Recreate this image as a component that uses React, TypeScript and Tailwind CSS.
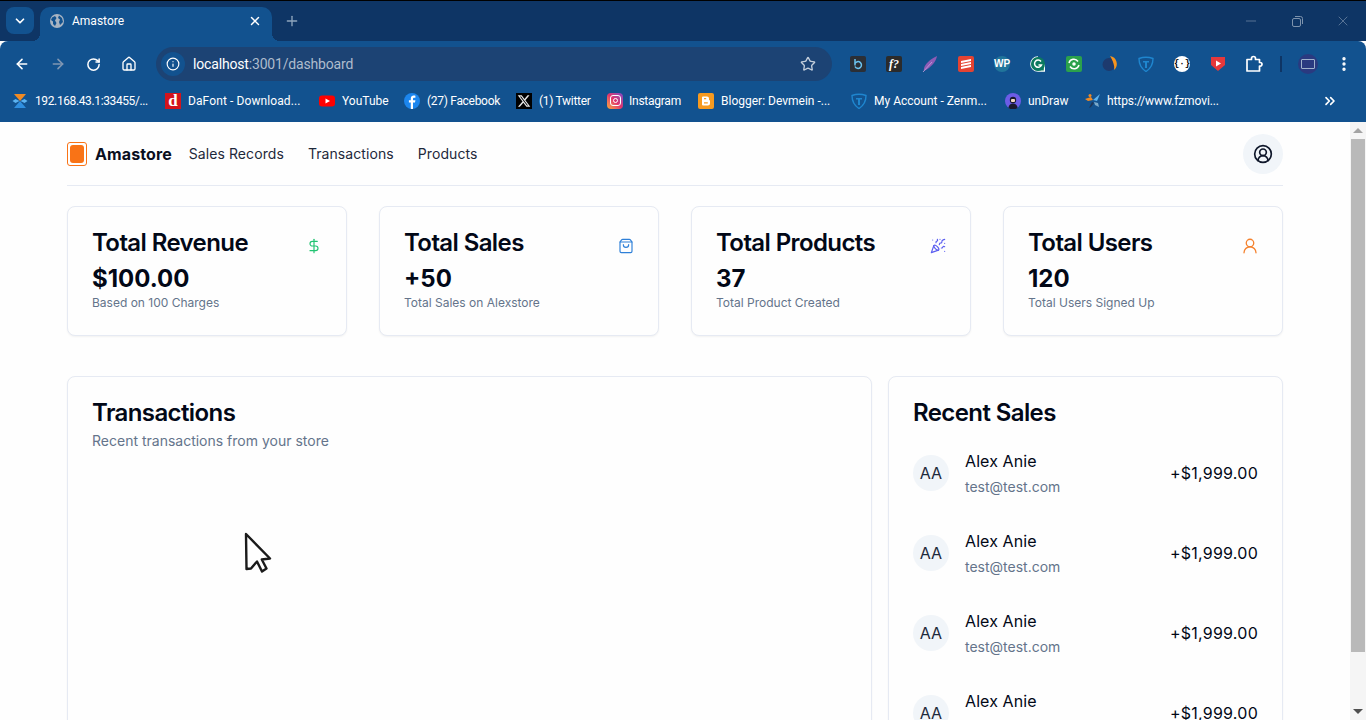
import {
  ArrowLeft, ArrowRight, ChevronDown, ChevronsRight, CircleUserRound, DollarSign, Home, Info,
  Minus, MoreVertical, PartyPopper, Plus, RotateCw, ShoppingBag, Star, UserRound, X,
} from 'lucide-react'
import type { ReactNode } from 'react'

const CARDS = [
  { title: 'Total Revenue', value: '$100.00', note: 'Based on 100 Charges', icon: <DollarSign size={16} strokeWidth={1.75} className="text-[#22c372]" /> },
  { title: 'Total Sales', value: '+50', note: 'Total Sales on Alexstore', icon: <ShoppingBag size={16} strokeWidth={1.75} className="text-[#2f80d8]" /> },
  { title: 'Total Products', value: '37', note: 'Total Product Created', icon: <PartyPopper size={16} strokeWidth={1.75} className="text-[#5b5ef0]" /> },
  { title: 'Total Users', value: '120', note: 'Total Users Signed Up', icon: <UserRound size={18} strokeWidth={1.75} className="-mt-px -mr-px text-[#f5822e]" /> },
]

const SALES = [1, 2, 3, 4]

function ZenShield({ size = 16 }: { size?: number }) {
  return (
    <svg width={size} height={size} viewBox="0 0 16 16" fill="none">
      <path d="M1 2.500C5 1 11 1 15 2.500C15 9 12 13 8 15.500C4 13 1 9 1 2.500Z" stroke="#1f86cf" strokeWidth="1.400" />
      <path d="M5 5h6v1.600H9V12H7V6.600H5Z" fill="#1f86cf" />
    </svg>
  )
}

const BOOKMARKS: { label: string; width: string; fit: string; icon: ReactNode }[] = [
  {
    label: '192.168.43.1:33455/...',
    width: 'w-[153px]',
    fit: 'tracking-[-0.38px]',
    icon: (
      <svg width="16" height="16" viewBox="0 0 16 16">
        <path d="M2 1h12L8 8Z" fill="#f08a24" />
        <path d="M2 15h12L8 8Z" fill="#2f8fe0" />
        <path d="M0.500 8l3-2 4 2-4 2Z M15.500 8l-3-2-4 2 4 2Z" fill="#5cb3f0" />
      </svg>
    ),
  },
  {
    label: 'DaFont - Download...',
    width: 'w-[154px]',
    fit: 'tracking-[0.1px]',
    icon: (
      <span className="flex h-4 w-4 items-center justify-center bg-[#d3141c] font-['Liberation_Serif',serif] text-[17px] leading-none font-bold text-white">d</span>
    ),
  },
  {
    label: 'YouTube',
    width: 'w-[85px]',
    fit: '',
    icon: (
      <svg width="16" height="16" viewBox="0 0 16 16">
        <rect x="0" y="2.500" width="16" height="11" rx="3" fill="#f00" />
        <path d="M6.500 5.500 11 8l-4.500 2.500Z" fill="#fff" />
      </svg>
    ),
  },
  {
    label: '(27) Facebook',
    width: 'w-[112px]',
    fit: 'tracking-[-0.3px]',
    icon: (
      <svg width="16" height="16" viewBox="0 0 16 16">
        <circle cx="8" cy="8" r="8" fill="#1c86ee" />
        <path d="M9 16V9.500h2l.4-2.300H9V6c0-.8.3-1.200 1.200-1.200h1.200V2.700C11 2.600 10.400 2.500 9.800 2.500 8 2.500 6.800 3.600 6.800 5.600v1.600H4.900v2.300h1.900V16Z" fill="#fff" />
      </svg>
    ),
  },
  {
    label: '(1) Twitter',
    width: 'w-[91px]',
    fit: 'tracking-[-0.3px]',
    icon: (
      <span className="flex h-4 w-4 items-center justify-center bg-black">
        <svg width="14" height="14" viewBox="0 0 24 24" fill="#e8e8e8">
          <path d="M18.200 2.200h3.300l-7.200 8.300 8.500 11.200h-6.700l-5.200-6.800-6 6.800H1.700l7.700-8.800L1.300 2.200h6.800l4.700 6.200Zm-1.100 17.500h1.800L7.100 4.100h-2Z" />
        </svg>
      </span>
    ),
  },
  {
    label: 'Instagram',
    width: 'w-[91px]',
    fit: '-ml-px tracking-[-0.25px]',
    icon: (
      <span className="flex h-4 w-4 items-center justify-center rounded-[4px] bg-gradient-to-tr from-[#f9a825] via-[#e1306c] to-[#7a3fc4]">
        <span className="flex h-[11px] w-[11px] items-center justify-center rounded-[3px] border border-white">
          <span className="h-[5px] w-[5px] rounded-full border border-white" />
        </span>
      </span>
    ),
  },
  {
    label: 'Blogger: Devmein -...',
    width: 'w-[153px]',
    fit: '',
    icon: (
      <svg width="16" height="16" viewBox="0 0 16 16">
        <rect width="16" height="16" rx="2" fill="#f79a1f" />
        <path d="M5 3.500h4a2 2 0 0 1 2 2V7l1 .6V10.500a2 2 0 0 1-2 2H5a1 1 0 0 1-1-1v-7a1 1 0 0 1 1-1Z" fill="#fff" />
        <path d="M6 5.700h2.200M6 9.800h3.800" stroke="#f79a1f" strokeWidth="1.200" />
      </svg>
    ),
  },
  { label: 'My Account - Zenm...', width: 'w-[154px]', fit: '', icon: <ZenShield /> },
  {
    label: 'unDraw',
    width: 'w-[80px]',
    fit: '',
    icon: (
      <svg width="16" height="16" viewBox="0 0 16 16">
        <circle cx="8" cy="8" r="8" fill="#6c5ce7" />
        <path d="M3.500 15c0-3 2-4.500 4.500-4.500s4.500 1.500 4.500 4.500a8 8 0 0 1-9 0Z" fill="#1a1a2e" />
        <circle cx="8" cy="7" r="3.200" fill="#1a1a2e" />
        <rect x="6" y="6" width="4" height="3" rx="1" fill="#f4d9c6" />
      </svg>
    ),
  },
  {
    label: 'https://www.fzmovi...',
    width: 'w-[150px]',
    fit: '-ml-px tracking-[-0.1px]',
    icon: (
      <svg width="16" height="16" viewBox="0 0 16 16">
        <path d="M0 6l6-2 2 3-5 1Z" fill="#f08a24" />
        <path d="M8 7l7-6-3 7Z" fill="#5cb3f0" />
        <path d="M7 9l-3 6 2-1 3-4Z" fill="#1d3557" />
        <path d="M9 9l4 1 1 4-4-2Z" fill="#7ba9c9" />
        <circle cx="5" cy="2.500" r="1.500" fill="#f08a24" />
      </svg>
    ),
  },
]

const EXTENSIONS: ReactNode[] = [
  <span className="flex h-4 w-4 items-center justify-center rounded-[2px] bg-[#2b2f36]">
    <svg width="13" height="13" viewBox="0 0 13 13" fill="none" stroke="#6cc4f0" strokeWidth="1.500">
      <path d="M3 1v6.500" />
      <path d="M3 5.500a3.400 3.400 0 1 1 0 3" />
    </svg>
  </span>,
  <span className="flex h-4 w-4 items-center justify-center rounded-[2px] bg-[#2b2b2b] font-['Liberation_Serif',serif] text-[12px] leading-none font-bold text-white italic">f?</span>,
  <svg width="16" height="16" viewBox="0 0 16 16">
    <path d="M15 0C14 5 10 11 2 15 1 12 4 5 15 0Z" fill="#8d5bb5" />
    <path d="M1 16 10 6" stroke="#c9a5e0" strokeWidth="0.800" />
  </svg>,
  <span className="flex h-4 w-4 flex-col items-center justify-center gap-[1px] rounded-[2px] bg-[#e44332]">
    <span className="h-[2px] w-[10px] -skew-y-12 bg-white" />
    <span className="h-[2px] w-[10px] -skew-y-12 bg-white" />
    <span className="h-[2px] w-[10px] -skew-y-12 bg-white" />
  </span>,
  <span className="flex h-4 w-4 items-center justify-center rounded-full bg-[#21759b] font-['Liberation_Sans',sans-serif] text-[10px] leading-none font-bold text-white">WP</span>,
  <svg width="16" height="16" viewBox="0 0 16 16" fill="none">
    <path d="M8 .8a7.200 7.200 0 1 0 0 14.400h6.400V8" stroke="#fff" strokeWidth="1.200" fill="#0c7a5f" />
    <circle cx="8" cy="8" r="7" fill="#0c7a5f" />
    <path d="M11 5.500A3.600 3.600 0 1 0 11.500 9H8.500" stroke="#fff" strokeWidth="1.500" />
  </svg>,
  <span className="flex h-4 w-4 items-center justify-center rounded-[2px] bg-[#2ba14b]">
    <svg width="12" height="12" viewBox="0 0 12 12" fill="none" stroke="#fff" strokeWidth="1.500">
      <path d="M1 5a5 5 0 0 1 9-1.500M11 7a5 5 0 0 1-9 1.500" />
      <circle cx="6" cy="6" r="1" fill="#fff" />
    </svg>
  </span>,
  <svg width="16" height="16" viewBox="0 0 16 16">
    <circle cx="7" cy="8.500" r="6.500" fill="#1d3a6e" />
    <path d="M8 0a8 8 0 0 1 4 14c1-4-1-9-4-14Z" fill="#f7941d" />
  </svg>,
  <ZenShield />,
  <span className="flex h-4 w-4 items-center justify-center rounded-full bg-white font-['Liberation_Mono',monospace] text-[9px] leading-none font-bold text-black">{'{·}'}</span>,
  <svg width="16" height="16" viewBox="0 0 16 16">
    <path d="M1 1h14v8l-7 6-7-6Z" fill="#e5383b" />
    <path d="M6 4.500 11 7.500 6 10.500Z" fill="#fff" />
  </svg>,
  <svg width="18" height="18" viewBox="0 0 18 18" fill="none" stroke="#fff" strokeWidth="1.700" strokeLinejoin="round">
    <path d="M2 4.500h4.500V3.500a2 2 0 0 1 4 0v1H14.500V7.500h.7a1.800 1.800 0 0 1 0 3.600h-.7V16H2Z" />
  </svg>,
]

function Cursor() {
  return (
    <svg className="absolute top-[532px] left-[243px]" width="30" height="42" viewBox="0 0 30 42">
      <path
        d="M3 2 27 26.500 18.800 27.500 23.500 36.500 19 39.500 14 29.500 8 36.500 3.500 37Z"
        fill="#fff"
        stroke="#1b1b1b"
        strokeWidth="2.400"
        strokeLinejoin="round"
      />
    </svg>
  )
}

function Card({ className, children }: { className: string; children: ReactNode }) {
  return <div className={`rounded-lg border border-[#e6eaf3] bg-[#fefefe] p-6 shadow-xs ${className}`}>{children}</div>
}

export default function App() {
  return (
    <div className="relative flex h-[720px] w-[1366px] flex-col overflow-hidden bg-[#fefefe] font-['Inter',sans-serif]">
      {/* browser chrome */}
      <div className="font-['Roboto',sans-serif] text-white">
        <div className="flex h-[41px] items-start border-t border-black bg-[#0e3565] pt-[6px] pl-[6px]">
          <button className="flex h-[27px] w-[28px] items-center justify-center rounded-lg bg-[#12528f]">
            <ChevronDown size={14} strokeWidth={3} />
          </button>
          <div className="relative ml-[6px] flex h-[34px] w-[232px] items-center rounded-t-[10px] bg-[#12528f] pr-[10px] pb-[6px] pl-[10px]">
            <span className="absolute right-[-8px] bottom-0 h-2 w-2 bg-[radial-gradient(circle_at_100%_0,transparent_8px,#12528f_8px)]" />
            <span className="absolute bottom-0 left-[-8px] h-2 w-2 bg-[radial-gradient(circle_at_0_0,transparent_8px,#12528f_8px)]" />
            <svg width="14" height="14" viewBox="0 0 14 14">
              <circle cx="7" cy="7" r="7" fill="#a9b4c2" />
              <path d="M2 3.500 5 2 6.500 4 5 6.500 6.500 9 5 12 3 10 3 7.500 1 6Z M9 1.500 12 4 13 8 10 11 9 8 10 5.500 8 4Z" fill="#12528f" />
            </svg>
            <span className="ml-2 flex-1 text-xs">Amastore</span>
            <X size={14} strokeWidth={2.5} />
          </div>
          <Plus size={16} className="mt-[6px] ml-3 text-[#8fa5bd]" />
          <div className="mt-[6px] mr-[15px] ml-auto flex items-center gap-[30px] text-[#7d93ad]">
            <Minus size={16} strokeWidth={1} />
            <svg width="16" height="16" viewBox="0 0 16 16" fill="none" stroke="currentColor">
              <rect x="3.500" y="5.500" width="8" height="8" rx="1.500" />
              <path d="M6 3.500h5.500a2 2 0 0 1 2 2V11" />
            </svg>
            <X size={16} strokeWidth={1} />
          </div>
        </div>

        <div className="rounded-t-lg bg-[#12528f]">
          <div className="flex h-[44px] items-center pt-[2px]">
            <div className="flex w-[156px] items-center">
              <ArrowLeft size={16} strokeWidth={2.4} className="ml-[14px]" />
              <ArrowRight size={16} strokeWidth={2.4} className="ml-5 text-[#8097b3]" />
              <RotateCw size={15} strokeWidth={2.4} className="ml-5" />
              <Home size={16} strokeWidth={2} className="ml-5" />
            </div>
            <div className="flex h-[34px] w-[676px] items-center rounded-full bg-[#1c4374] pr-4 pl-[5px]">
              <span className="flex h-6 w-6 items-center justify-center rounded-full bg-[#12528f]">
                <Info size={14} />
              </span>
              <span className="ml-2 flex-1 text-[14px] tracking-[-0.17px]">
                localhost<span className="text-[#aebccd]">:3001/dashboard</span>
              </span>
              <Star size={16} className="text-[#c3cedb]" />
            </div>
            <div className="ml-2 flex items-center">
              {EXTENSIONS.map((icon, i) => (
                <span key={i} className="flex w-9 justify-center">{icon}</span>
              ))}
            </div>
            <span className="ml-[8px] h-[16px] w-[2px] bg-[#0e3565]" />
            <span className="ml-[16px] flex h-[20px] w-[20px] items-center justify-center rounded-full bg-[#2a3a80]">
              <span className="h-[10px] w-[14px] rounded-[1px] border border-[#9fb2cc]" />
            </span>
            <MoreVertical size={18} strokeWidth={2.5} className="ml-[17px]" />
          </div>

          <div className="flex h-[37px] items-center pb-[6px] pl-[12px] text-xs">
            {BOOKMARKS.map(b => (
              <div key={b.label} className={`flex items-center gap-[7px] ${b.width}`}>
                <span className="flex w-4 shrink-0 justify-center">{b.icon}</span>
                <span className={`whitespace-nowrap ${b.fit}`}>{b.label}</span>
              </div>
            ))}
            <ChevronsRight size={16} strokeWidth={2.5} className="ml-[87px]" />
          </div>
        </div>
      </div>

      {/* page */}
      <div className="flex min-h-0 flex-1">
        <main className="min-w-0 flex-1 overflow-hidden">
          <div className="mx-auto max-w-7xl px-8">
            <header className="flex items-center justify-between border-b border-[#e6eaf3] pt-3 pb-[11px]">
              <div className="flex items-center">
                <span className="flex h-6 w-5 items-center justify-center rounded-[3px] border border-[#f97316]">
                  <span className="h-[18px] w-[14px] rounded-[3px] bg-[#f97316]" />
                </span>
                <span className="ml-2 text-base font-bold tracking-[0.1px] text-[#0a0f1e]">Amastore</span>
                <nav className="ml-[17px] flex gap-6 text-sm tracking-[0.08px] text-[#1e293b]">
                  <a>Sales Records</a>
                  <a>Transactions</a>
                  <a>Products</a>
                </nav>
              </div>
              <button className="flex h-10 w-10 items-center justify-center rounded-full bg-[#f1f5f9] text-[#0f172a]">
                <CircleUserRound size={20} />
              </button>
            </header>

            <div className="mt-5 grid grid-cols-4 gap-8">
              {CARDS.map(c => (
                <Card key={c.title} className="">
                  <div className="flex items-start justify-between">
                    <h3 className="text-2xl leading-6 font-semibold tracking-tight text-[#020817]">{c.title}</h3>
                    <span className="mt-[7px]">{c.icon}</span>
                  </div>
                  <div className="mt-2 text-2xl font-bold text-[#020817]">{c.value}</div>
                  <p className="text-xs text-[#64748b]">{c.note}</p>
                </Card>
              ))}
            </div>

            <div className="mt-10 flex items-start gap-4">
              <Card className="h-[500px] w-[805px]">
                <h3 className="text-2xl leading-6 font-semibold tracking-tight text-[#020817]">Transactions</h3>
                <p className="mt-1.5 text-sm text-[#64748b]">Recent transactions from your store</p>
              </Card>
              <Card className="w-[395px]">
                <h3 className="text-2xl leading-6 font-semibold tracking-tight text-[#020817]">Recent Sales</h3>
                <div className="mt-6 flex flex-col gap-8">
                  {SALES.map(n => (
                    <div key={n} className="flex items-center">
                      <span className="flex h-9 w-9 items-center justify-center rounded-full bg-[#f1f5f9] text-base text-[#1e293b]">AA</span>
                      <div className="ml-4 flex-1">
                        <p className="text-base tracking-[0.1px] text-[#020817]">Alex Anie</p>
                        <p className="mt-1 text-sm text-[#64748b]">test@test.com</p>
                      </div>
                      <span className="text-base tracking-[0.25px] text-[#020817]">+$1,999.00</span>
                    </div>
                  ))}
                </div>
              </Card>
            </div>
          </div>
        </main>

        {/* scrollbar */}
        <div className="flex w-4 flex-col items-center bg-[#f5f5f5]">
          <div className="flex h-[17px] items-center justify-center">
            <span className="h-0 w-0 border-x-[5px] border-b-[5px] border-x-transparent border-b-[#a3a3a3]" />
          </div>
          <div className="h-[513px] w-[14px] bg-[#b9b9b9]" />
          <div className="mt-auto flex h-[17px] items-center justify-center">
            <span className="h-0 w-0 border-x-[5px] border-t-[5px] border-x-transparent border-t-[#505050]" />
          </div>
        </div>
      </div>

      <Cursor />
    </div>
  )
}
